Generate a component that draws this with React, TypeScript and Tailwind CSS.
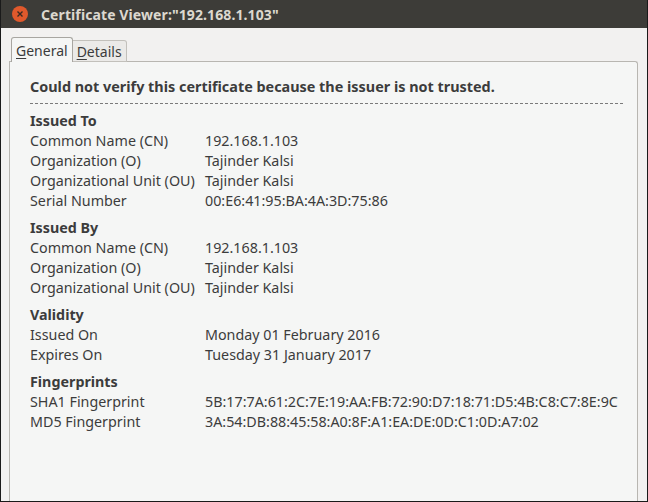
import React from 'react'

type Row = [string, string]

const sections: { title: string; rows: Row[] }[] = [
  {
    title: 'Issued To',
    rows: [
      ['Common Name (CN)', '192.168.1.103'],
      ['Organization (O)', 'Tajinder Kalsi'],
      ['Organizational Unit (OU)', 'Tajinder Kalsi'],
      ['Serial Number', '00:E6:41:95:BA:4A:3D:75:86'],
    ],
  },
  {
    title: 'Issued By',
    rows: [
      ['Common Name (CN)', '192.168.1.103'],
      ['Organization (O)', 'Tajinder Kalsi'],
      ['Organizational Unit (OU)', 'Tajinder Kalsi'],
    ],
  },
  {
    title: 'Validity',
    rows: [
      ['Issued On', 'Monday 01 February 2016'],
      ['Expires On', 'Tuesday 31 January 2017'],
    ],
  },
  {
    title: 'Fingerprints',
    rows: [
      ['SHA1 Fingerprint', '5B:17:7A:61:2C:7E:19:AA:FB:72:90:D7:18:71:D5:4B:C8:C7:8E:9C'],
      ['MD5 Fingerprint', '3A:54:DB:88:45:58:A0:8F:A1:EA:DE:0D:C1:0D:A7:02'],
    ],
  },
]

export default function App() {
  return (
    <div
      className="w-[648px] h-[502px] flex flex-col bg-[#f2f1f0] border-b border-x border-[#1a1a1a] overflow-hidden text-[#3c3c3c]"
      style={{ fontFamily: '"Noto Sans", "Open Sans", sans-serif' }}
    >
      {/* title bar */}
      <div className="h-[28px] shrink-0 bg-[#3d3c38] flex items-center pl-[11px] gap-[13px]">
        <div className="w-[16px] h-[16px] rounded-full bg-[#e0592c] flex items-center justify-center">
          <svg width="8" height="8" viewBox="0 0 8 8">
            <path d="M1.5 1.5 L6.5 6.5 M6.5 1.5 L1.5 6.5" stroke="#3a2a22" strokeWidth="1.4" />
          </svg>
        </div>
        <span className="text-[14px] font-bold text-[#dcd8cf] tracking-[0.1px]">Certificate Viewer:"192.168.1.103"</span>
      </div>

      <div className="flex-1 flex flex-col pl-[8px] pr-[9px] pt-[9px]">
        {/* tabs */}
        <div className="flex items-end h-[25px] pl-[2px] -mb-px relative z-10">
          <div className="h-[25px] px-[4px] border border-b-0 border-[#a8a6a1] rounded-t-[3px] bg-[#f5f6f5] text-[14px] leading-[23px] flex items-center">
            <span>
              <span className="underline underline-offset-2">G</span>eneral
            </span>
          </div>
          <div className="h-[22px] px-[4px] border border-l-0 border-b border-[#c2c0bb] rounded-tr-[3px] bg-[#ebeae8] text-[14px] flex items-center">
            <span>
              <span className="underline underline-offset-2">D</span>etails
            </span>
          </div>
        </div>

        {/* panel */}
        <div className="flex-1 bg-[#f5f6f5] border border-b-0 border-[#b8b6b1] rounded-tr-[3px] pl-[20px] pr-[14px] pt-[15px] text-[14.3px] leading-[20px]">
          <div className="font-bold text-[14.4px] pb-[6px] border-b border-dashed border-[#7a7a7a]">
            Could not verify this certificate because the issuer is not trusted.
          </div>
          <div className="flex flex-col gap-[7px] pt-[7px]">
            {sections.map((s) => (
              <div key={s.title}>
                <div className="font-bold">{s.title}</div>
                {s.rows.map(([k, v]) => (
                  <div key={k + v} className="flex">
                    <div className="w-[175px] shrink-0">{k}</div>
                    <div>{v}</div>
                  </div>
                ))}
              </div>
            ))}
          </div>
        </div>
      </div>
    </div>
  )
}
